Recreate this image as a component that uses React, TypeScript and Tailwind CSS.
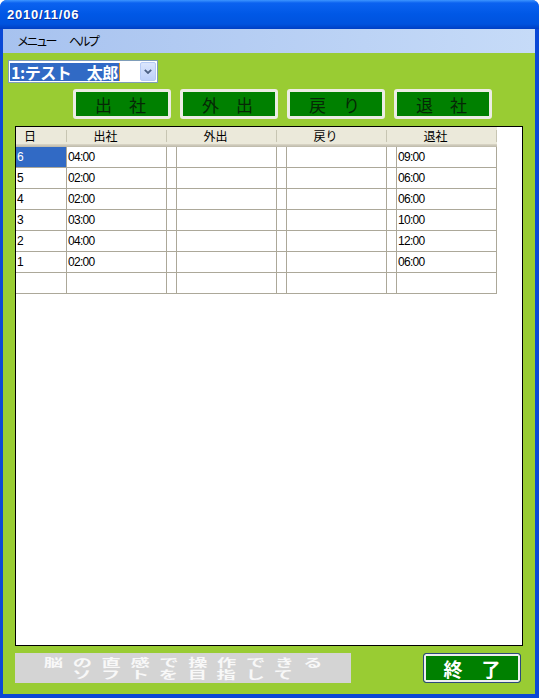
import React from "react";

interface Row {
  day: string;
  inTime: string;
  outTime: string;
}

const rows: Row[] = [
  { day: "6", inTime: "04:00", outTime: "09:00" },
  { day: "5", inTime: "02:00", outTime: "06:00" },
  { day: "4", inTime: "02:00", outTime: "06:00" },
  { day: "3", inTime: "03:00", outTime: "10:00" },
  { day: "2", inTime: "04:00", outTime: "12:00" },
  { day: "1", inTime: "02:00", outTime: "06:00" },
  { day: "", inTime: "", outTime: "" },
];

// 列幅 (右罫線込み)
const headers = [
  { label: "日", w: "w-[51px]" },
  { label: "出社", w: "w-[100px]" },
  { label: "", w: "w-[10px]" },
  { label: "外出", w: "w-[100px]" },
  { label: "", w: "w-[10px]" },
  { label: "戻り", w: "w-[100px]" },
  { label: "", w: "w-[10px]" },
  { label: "退社", w: "w-[100px]" },
];

const actionButtons = ["出　社", "外　出", "戻　り", "退　社"];

export default function App() {
  return (
    <div className="w-[539px] h-[698px] bg-[#0a48d6] rounded-t-[7px] overflow-hidden flex flex-col font-['Liberation_Sans','Noto_Sans_CJK_JP',sans-serif]">
      {/* タイトルバー */}
      <div className="h-[29px] shrink-0 flex items-center pl-[7px] pt-[1px] bg-[linear-gradient(to_bottom,#3d95ff_0px,#0b62f0_3px,#0058e6_14px,#0053de_24px,#003fc4_29px)]">
        <span className="text-white font-bold text-[13px] tracking-[0.8px] [text-shadow:1px_1px_0_#0b2e9c]">
          2010/11/06
        </span>
      </div>

      <div className="flex-1 flex flex-col pl-[3px] pr-[4px] pb-[4px]">
        {/* メニュー */}
        <div className="h-[24px] shrink-0 flex items-center bg-[linear-gradient(to_right,#a7c2ef,#c6dbf8)] text-[12px] text-black font-['Noto_Sans_CJK_JP',sans-serif]">
          <span className="ml-[14px] tracking-[-2.5px]">メニュー</span>
          <span className="ml-[14px] tracking-[-2.5px]">ヘルプ</span>
        </div>

        {/* 本体 */}
        <div className="flex-1 bg-[#99cc33] flex flex-col pt-[7px]">
          {/* コンボボックス */}
          <div className="ml-[5px] w-[150px] h-[23px] border border-[#7f9db9] bg-white flex items-center pl-[1px] pr-[1px]">
            <div className="h-[18px] flex items-center bg-[#316ac5] pl-[1px] pr-[1px]">
              <span className="text-white font-bold text-[16px] tracking-[-0.5px] leading-none font-['Noto_Sans_CJK_JP',sans-serif]">
                1:テスト　太郎
              </span>
            </div>
            <div className="w-[1px] h-[18px] bg-[#e09a2c]" />
            <div className="ml-auto w-[16px] h-[19px] rounded-[2px] border border-[#b6cbf6] bg-[linear-gradient(to_bottom,#dbe6fd,#bdd0fa)] flex items-center justify-center">
              <svg width="8" height="5" viewBox="0 0 8 5">
                <path d="M0.8 0.8 L4 4 L7.2 0.8" fill="none" stroke="#4d6185" strokeWidth="1.8" />
              </svg>
            </div>
          </div>

          {/* 打刻ボタン */}
          <div className="mt-[6px] ml-[70px] flex gap-[9px]">
            {actionButtons.map((label) => (
              <button
                key={label}
                className="w-[98px] h-[30px] rounded-[3px] border-[3px] border-[#ecece4] bg-[#008000] text-[#062806] text-[17px] leading-none font-['Noto_Sans_CJK_JP',sans-serif] flex items-center justify-center pr-[3px]"
              >
                {label}
              </button>
            ))}
          </div>

          {/* グリッド */}
          <div className="mt-[7px] ml-[12px] w-[508px] h-[520px] border border-black bg-white flex flex-col">
            <div className="h-[20px] flex w-[481px] bg-[#ebe9da] shadow-[inset_0_-1px_0_#c1bdad,inset_0_-2px_0_#cbc7b8,inset_0_-3px_0_#d6d2c2]">
              {headers.map((h, i) => (
                <div key={i} className={`${h.w} h-full flex items-center pb-[2px]`}>
                  <span className="flex-1 text-center text-[12px] text-black pr-[22px] font-['Noto_Sans_CJK_JP',sans-serif] leading-none">
                    {h.label}
                  </span>
                  <div className="w-[1px] h-[12px] bg-[#c7c5b2]" />
                </div>
              ))}
            </div>

            {rows.map((r, i) => {
              const cells = [r.day, r.inTime, "", "", "", "", "", r.outTime];
              return (
                <div key={i} className="flex w-[481px] h-[21px] border-b border-[#aca899]">
                  {cells.map((c, j) => (
                    <div
                      key={j}
                      className={`${headers[j].w} h-full border-r border-[#aca899] flex items-center pl-[1px] text-[12px] tracking-[-0.7px] ${
                        i === 0 && j === 0 ? "bg-[#316ac5] text-white" : "text-black"
                      }`}
                    >
                      {c}
                    </div>
                  ))}
                </div>
              );
            })}
          </div>

          {/* 下段 */}
          <div className="mt-[7px] px-[12px] flex justify-between">
            <div className="w-[336px] h-[30px] bg-[#d4d4d4] flex flex-col items-center justify-center">
              <span className="block h-[12px] scale-x-[1.75] font-bold text-[11px] leading-[12px] tracking-[5.5px] pl-[5.5px] text-[#f8f8f8] font-['Noto_Sans_CJK_JP',sans-serif] whitespace-nowrap">
                脳の直感で操作できる
              </span>
              <span className="block h-[12px] scale-x-[1.75] font-bold text-[11px] leading-[12px] tracking-[5.5px] pl-[5.5px] text-[#f8f8f8] font-['Noto_Sans_CJK_JP',sans-serif] whitespace-nowrap">
                ソフトを目指して
              </span>
            </div>
            <button className="mr-[2px] w-[98px] h-[30px] rounded-[3px] border border-[#2d4a7a] bg-[#008000] shadow-[inset_0_0_0_2px_#eeeeee] text-white font-bold text-[19px] leading-none font-['Noto_Sans_CJK_JP',sans-serif] flex items-center justify-center">
              終　了
            </button>
          </div>
        </div>
      </div>
    </div>
  );
}
